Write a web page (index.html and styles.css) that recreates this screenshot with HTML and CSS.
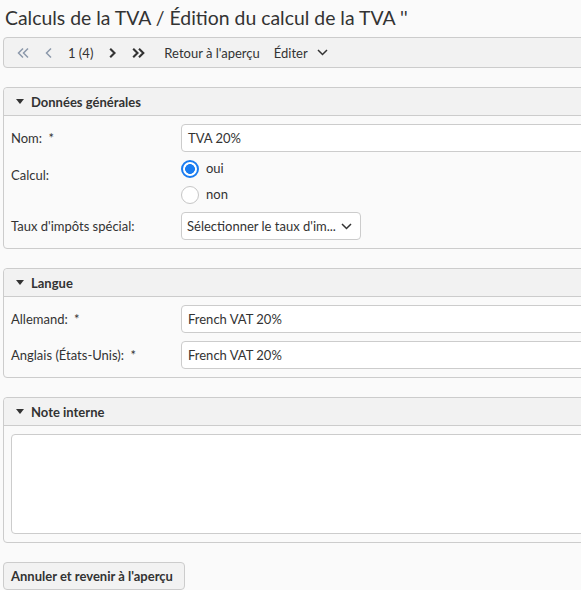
FILE: index.html
```html
<!DOCTYPE html>
<html lang="fr">
<head>
<meta charset="utf-8">
<title>Calculs de la TVA</title>
<link rel="stylesheet" href="styles.css">
</head>
<body>
<div class="page">
  <h1 class="title">Calculs de la TVA / Édition du calcul de la TVA ''</h1>

  <div class="toolbar">
    <span class="tb-icon disabled"><svg width="12" height="12" viewBox="0 0 12 12"><path d="M6 1.5 1.5 6 6 10.5M11 1.5 6.5 6 11 10.5" fill="none" stroke="currentColor" stroke-width="1.5"/></svg></span>
    <span class="tb-icon disabled"><svg width="7" height="12" viewBox="0 0 7 12"><path d="M6 1.5 1.5 6 6 10.5" fill="none" stroke="currentColor" stroke-width="1.5"/></svg></span>
    <span class="tb-text">1 (4)</span>
    <span class="tb-icon"><svg width="7" height="12" viewBox="0 0 7 12"><path d="M1.2 1.8 5.5 6 1.2 10.2" fill="none" stroke="currentColor" stroke-width="2.1"/></svg></span>
    <span class="tb-icon"><svg width="13" height="12" viewBox="0 0 13 12"><path d="M1.2 1.8 5.5 6 1.2 10.2M7 1.8 11.3 6 7 10.2" fill="none" stroke="currentColor" stroke-width="2.1"/></svg></span>
    <span class="tb-text back">Retour à l'aperçu</span>
    <span class="tb-text edit">Éditer <svg class="chev" width="11" height="7" viewBox="0 0 11 7"><path d="M1 1 5.5 5.5 10 1" fill="none" stroke="currentColor" stroke-width="1.5"/></svg></span>
  </div>

  <section class="card">
    <header class="card-head"><span class="caret"></span>Données générales</header>
    <div class="card-body">
      <div class="row">
        <label class="lbl">Nom: <span class="req">*</span></label>
        <div class="input">TVA 20%</div>
      </div>
      <div class="row row-radio">
        <label class="lbl lbl-top">Calcul:</label>
        <div class="radios">
          <div class="radio-item"><span class="radio checked"></span>oui</div>
          <div class="radio-item"><span class="radio"></span>non</div>
        </div>
      </div>
      <div class="row">
        <label class="lbl">Taux d'impôts spécial:</label>
        <div class="select"><span>Sélectionner le taux d'im...</span><svg width="11" height="7" viewBox="0 0 11 7"><path d="M1 1 5.5 5.5 10 1" fill="none" stroke="currentColor" stroke-width="1.5"/></svg></div>
      </div>
    </div>
  </section>

  <section class="card">
    <header class="card-head"><span class="caret"></span>Langue</header>
    <div class="card-body">
      <div class="row">
        <label class="lbl">Allemand: <span class="req">*</span></label>
        <div class="input">French VAT 20%</div>
      </div>
      <div class="row">
        <label class="lbl">Anglais (États-Unis): <span class="req">*</span></label>
        <div class="input">French VAT 20%</div>
      </div>
    </div>
  </section>

  <section class="card">
    <header class="card-head"><span class="caret"></span>Note interne</header>
    <div class="card-body">
      <div class="textarea"></div>
    </div>
  </section>

  <button class="btn">Annuler et revenir à l'aperçu</button>
</div>
</body>
</html>
```

FILE: styles.css
```css
*, *::before, *::after { box-sizing: border-box; }
html, body {
  margin: 0;
  padding: 0;
  background: #fafafa;
  overflow: hidden;
}
body {
  font-family: Lato, "Noto Sans", sans-serif;
  font-size: 13px;
  color: #333333;
}
.page {
  width: 760px;
  padding: 0 0 0 3px;
}
.title {
  margin: 0;
  padding: 5px 0 0 2px;
  font-size: 19.4px;
  font-weight: 400;
  line-height: 26px;
  color: #333333;
  height: 37px;
}
.toolbar {
  display: flex;
  align-items: center;
  height: 31px;
  border: 1px solid #cccccc;
  border-radius: 4px;
  background: #f2f2f2;
  padding-left: 13px;
  gap: 16px;
}
.tb-icon {
  display: inline-flex;
  align-items: center;
  color: #333333;
}
.tb-icon.disabled { color: #8c99ab; }
.tb-text {
  display: inline-flex;
  align-items: center;
}
.tb-text.back { margin-left: 3px; }
.tb-text.edit { margin-left: -2px; }
.tb-text .chev { margin-left: 9px; }

.card {
  margin-top: 19px;
  border: 1px solid #cccccc;
  border-radius: 4px;
  background: #fafafa;
}
.card-head {
  display: flex;
  align-items: center;
  height: 28px;
  padding-left: 12px;
  background: #f2f2f2;
  border-bottom: 1px solid #cccccc;
  font-weight: 700;
  border-radius: 4px 4px 0 0;
}
.caret {
  width: 0;
  height: 0;
  border-left: 4.5px solid transparent;
  border-right: 4.5px solid transparent;
  border-top: 5px solid #333333;
  margin-right: 7px;
}
.card-body {
  padding: 8px 0 8px 7px;
  display: flex;
  flex-direction: column;
  gap: 8px;
}
.row {
  display: flex;
  align-items: center;
}
.row-radio { align-items: flex-start; }
.lbl {
  width: 170px;
  flex: none;
}
.lbl-top { padding-top: 6px; line-height: 18px; }
.req { margin-left: 3px; }
.input {
  flex: 1;
  height: 28px;
  border: 1px solid #cccccc;
  border-radius: 4px;
  background: #fff;
  padding-left: 6px;
  display: flex;
  align-items: center;
}
.radios {
  display: flex;
  flex-direction: column;
  gap: 8px;
}
.radio-item {
  display: flex;
  align-items: center;
  height: 18px;
  line-height: 18px;
  position: relative;
  top: -1px;
}
.radio {
  width: 18px;
  height: 18px;
  border: 1px solid #c6c6c6;
  border-radius: 50%;
  background: #fff;
  margin-right: 7px;
  position: relative;
  top: 1px;
}
.radio.checked {
  border: 2px solid #1a7cf0;
  background: radial-gradient(circle, #1a7cf0 0 4.6px, #fff 5.2px);
}
.select {
  width: 180px;
  height: 28px;
  border: 1px solid #cccccc;
  border-radius: 4px;
  background: #fff;
  padding: 0 8px 0 5px;
  display: flex;
  align-items: center;
  justify-content: space-between;
}
.textarea {
  height: 100px;
  border: 1px solid #cccccc;
  border-radius: 4px;
  background: #fff;
}
.btn {
  margin-top: 19px;
  display: block;
  font-family: Lato, "Noto Sans", sans-serif;
  font-size: 13px;
  font-weight: 700;
  color: #333333;
  background: #f2f2f2;
  border: 1px solid #cccccc;
  border-radius: 4px;
  height: 28px;
  width: 182px;
  padding: 0 0 0 7px;
  text-align: left;
}
```
